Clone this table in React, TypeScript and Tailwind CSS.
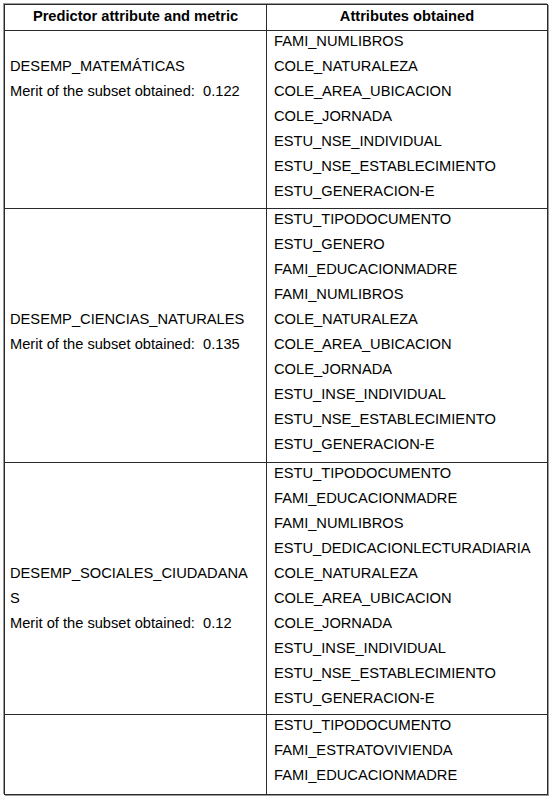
import React from 'react';

type Row = { left: string[]; right: string[]; pb: string };

const rows: Row[] = [
  {
    left: ['', 'DESEMP_MATEMÁTICAS', 'Merit of the subset obtained:  0.122'],
    right: [
      'FAMI_NUMLIBROS',
      'COLE_NATURALEZA',
      'COLE_AREA_UBICACION',
      'COLE_JORNADA',
      'ESTU_NSE_INDIVIDUAL',
      'ESTU_NSE_ESTABLECIMIENTO',
      'ESTU_GENERACION-E',
    ],
    pb: 'pb-[1px]',
  },
  {
    left: ['', '', '', '', 'DESEMP_CIENCIAS_NATURALES', 'Merit of the subset obtained:  0.135'],
    right: [
      'ESTU_TIPODOCUMENTO',
      'ESTU_GENERO',
      'FAMI_EDUCACIONMADRE',
      'FAMI_NUMLIBROS',
      'COLE_NATURALEZA',
      'COLE_AREA_UBICACION',
      'COLE_JORNADA',
      'ESTU_INSE_INDIVIDUAL',
      'ESTU_NSE_ESTABLECIMIENTO',
      'ESTU_GENERACION-E',
    ],
    pb: 'pb-[2px]',
  },
  {
    left: ['', '', '', '', 'DESEMP_SOCIALES_CIUDADANA', 'S', 'Merit of the subset obtained:  0.12'],
    right: [
      'ESTU_TIPODOCUMENTO',
      'FAMI_EDUCACIONMADRE',
      'FAMI_NUMLIBROS',
      'ESTU_DEDICACIONLECTURADIARIA',
      'COLE_NATURALEZA',
      'COLE_AREA_UBICACION',
      'COLE_JORNADA',
      'ESTU_INSE_INDIVIDUAL',
      'ESTU_NSE_ESTABLECIMIENTO',
      'ESTU_GENERACION-E',
    ],
    pb: 'pb-0',
  },
  {
    left: [],
    right: ['ESTU_TIPODOCUMENTO', 'FAMI_ESTRATOVIVIENDA', 'FAMI_EDUCACIONMADRE'],
    pb: 'pb-[3px]',
  },
];

function Line({ text }: { text: string }) {
  return <div className="h-[25px] leading-[18px] whitespace-pre">{text}</div>;
}

export default function App() {
  return (
    <div
      className="w-[551px] h-[800px] bg-white pl-[4px] pt-[4px] text-black text-[14.67px]"
      style={{ fontFamily: '"Liberation Sans", Arial, sans-serif' }}
    >
      <div className="grid grid-cols-[262px_281px] w-[544px] border-t border-l border-[#2a2a2a] shadow-[-1px_-1px_0_#9a9a9a,1px_1px_0_#9a9a9a]">
        <div className="h-[26px] pt-[2px] leading-[18px] font-bold text-center border-r border-b border-[#2a2a2a]">
          Predictor attribute and metric
        </div>
        <div className="h-[26px] pt-[2px] leading-[18px] font-bold text-center border-r border-b border-[#2a2a2a]">
          Attributes obtained
        </div>
        {rows.map((row, i) => (
          <React.Fragment key={i}>
            <div className={`pl-[5px] pt-[1px] ${row.pb} border-r border-b border-[#2a2a2a]`}>
              {row.left.map((t, j) => (
                <Line key={j} text={t} />
              ))}
            </div>
            <div className={`pl-[7px] pt-[1px] ${row.pb} border-r border-b border-[#2a2a2a]`}>
              {row.right.map((t, j) => (
                <Line key={j} text={t} />
              ))}
            </div>
          </React.Fragment>
        ))}
      </div>
    </div>
  );
}
